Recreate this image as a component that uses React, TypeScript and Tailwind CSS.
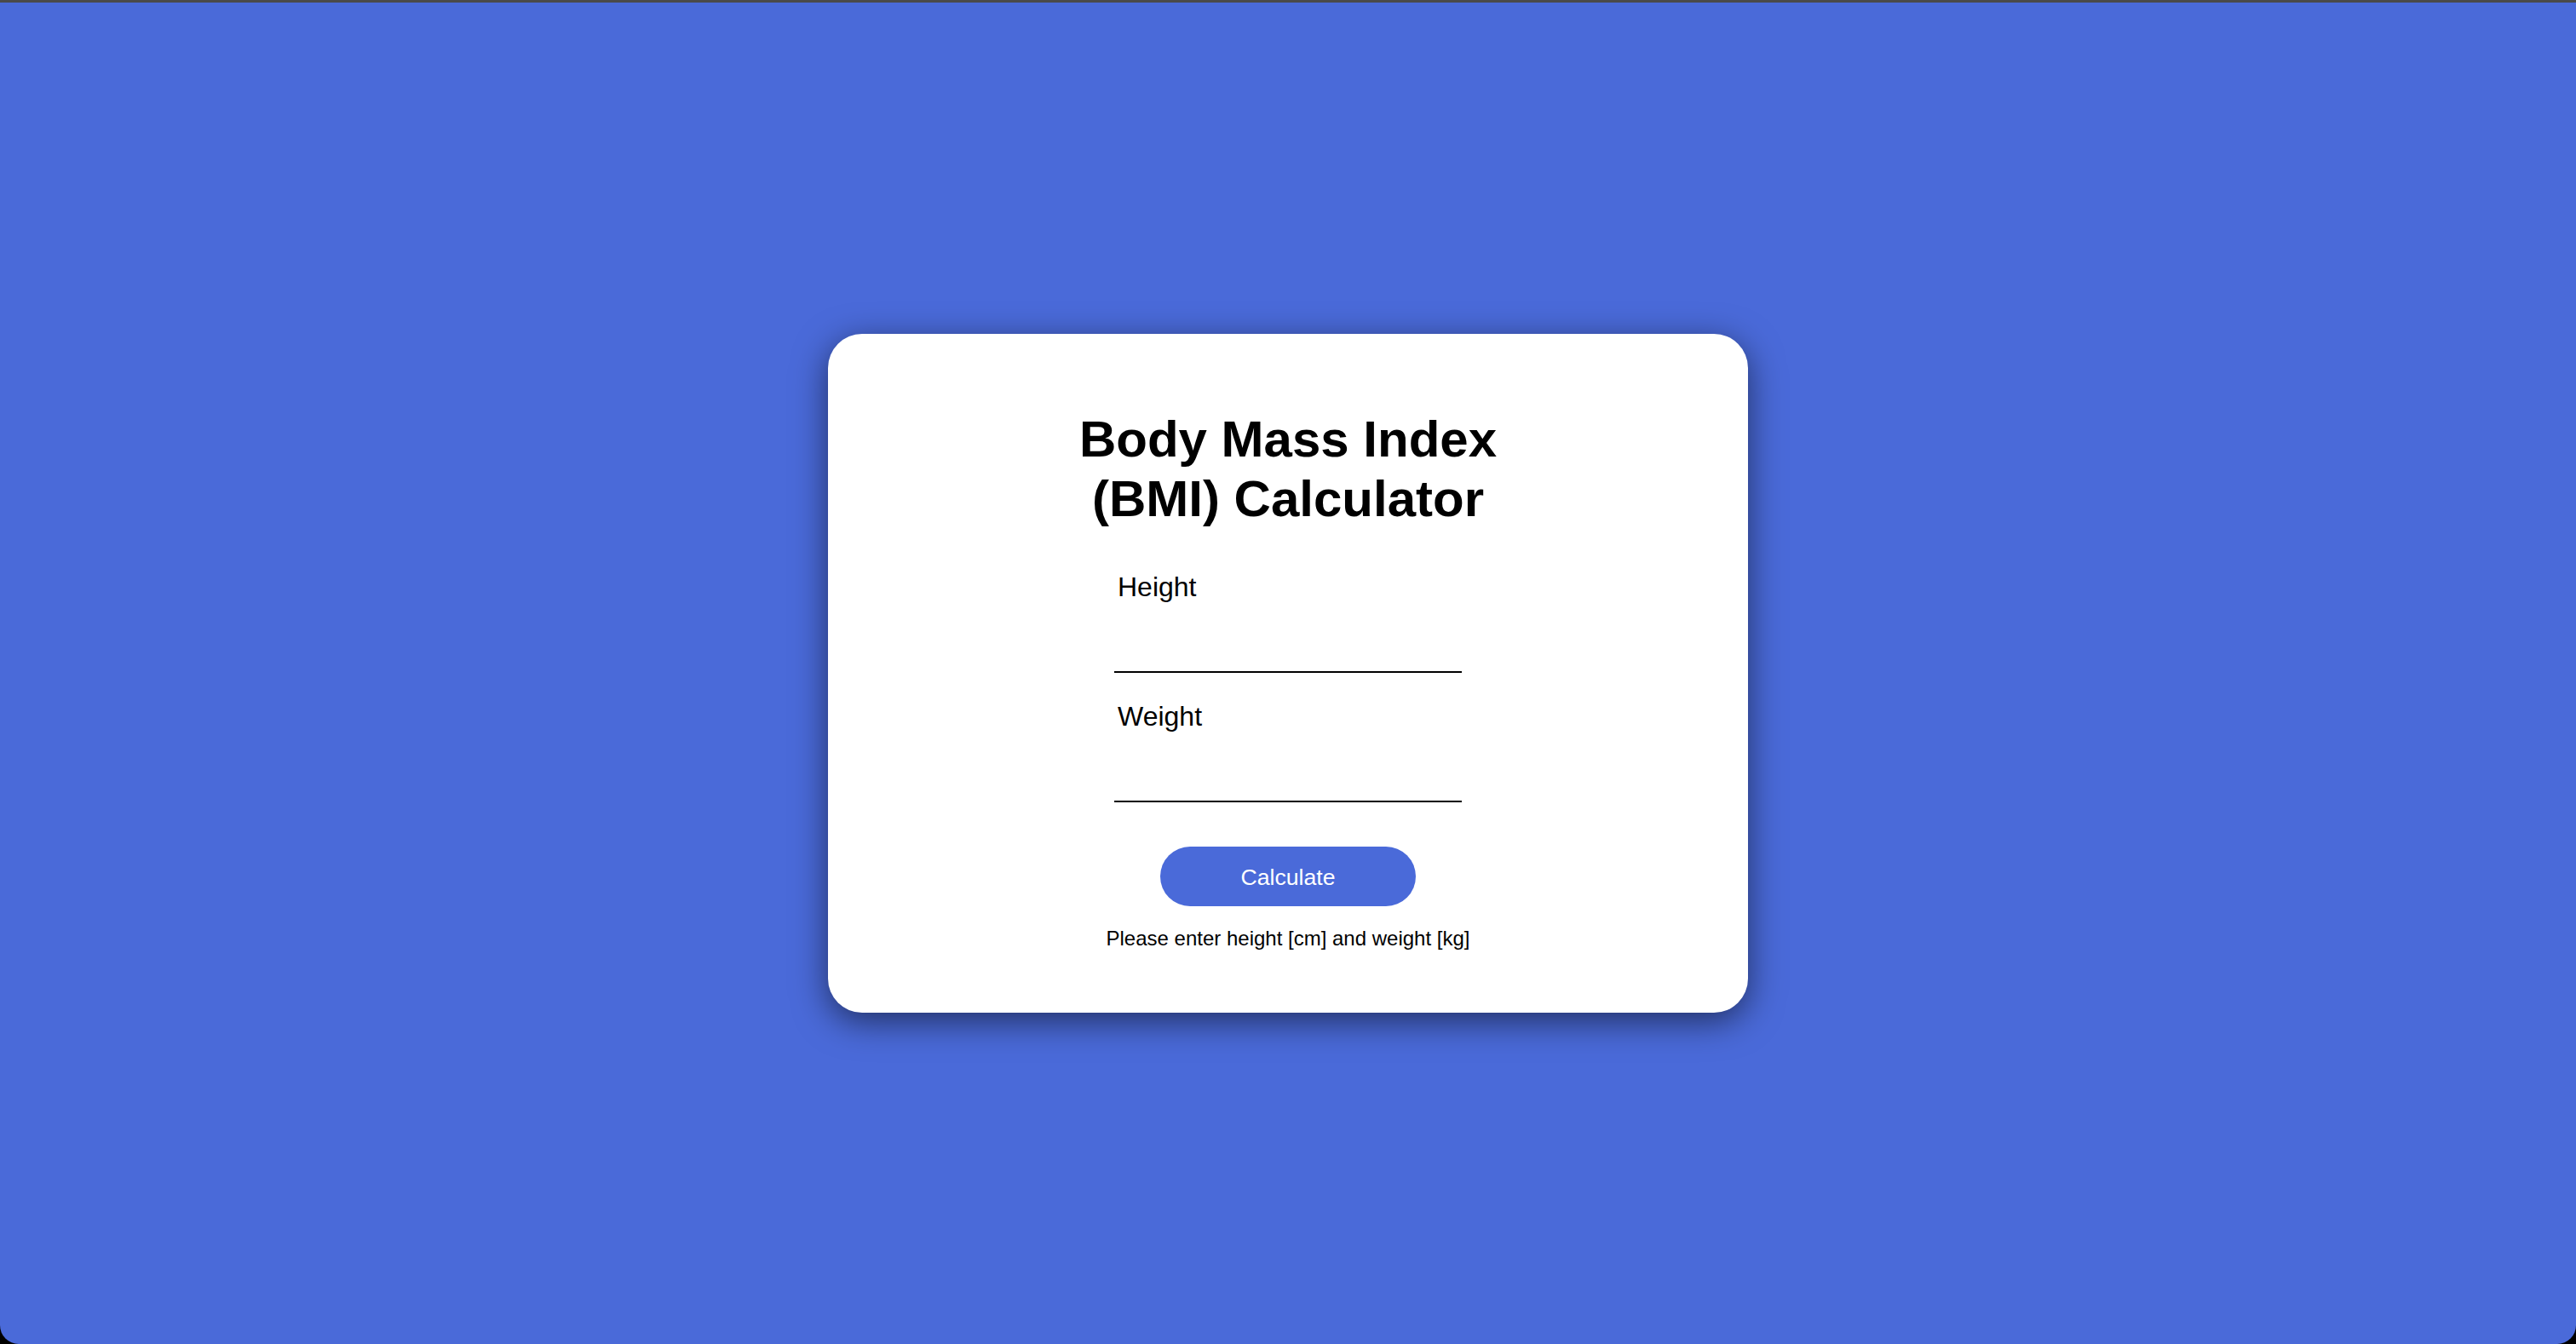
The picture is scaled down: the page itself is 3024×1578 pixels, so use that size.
export default function App() {
  return (
    <div className="h-screen w-full bg-black">
      <div
        className="flex h-full w-full items-center justify-center rounded-b-[22px] border-t-[3px] border-[#4a4a4a] bg-[#4a6ad9]"
        style={{ fontFamily: '"Liberation Sans", Arial, sans-serif' }}
      >
        <div className="flex h-[797px] w-[1080px] flex-col items-center rounded-[40px] bg-white pt-[89px] shadow-[0_10px_40px_rgba(0,0,0,0.55)]">
          <h1 className="w-[520px] text-center text-[60px] font-bold leading-[70px] text-black">
            Body Mass Index (BMI) Calculator
          </h1>

          <form className="mt-[50px] flex flex-col items-center">
            <div className="flex w-[408px] flex-col">
              <label className="pl-[4px] text-[32px] leading-[37px] text-black">Height</label>
              <input
                type="text"
                className="mt-[10px] h-[72px] w-full border-b-2 border-black bg-transparent text-[32px] outline-none"
              />
            </div>
            <div className="mt-[33px] flex w-[408px] flex-col">
              <label className="pl-[4px] text-[32px] leading-[37px] text-black">Weight</label>
              <input
                type="text"
                className="mt-[10px] h-[72px] w-full border-b-2 border-black bg-transparent text-[32px] outline-none"
              />
            </div>

            <button
              type="button"
              className="mt-[52px] h-[70px] w-[300px] rounded-full bg-[#4a6ad9] pt-[2px] text-[26.67px] text-white"
            >
              Calculate
            </button>
          </form>

          <p className="mt-[24px] text-[24px] leading-[28px] text-black">
            Please enter height [cm] and weight [kg]
          </p>
        </div>
      </div>
    </div>
  )
}
